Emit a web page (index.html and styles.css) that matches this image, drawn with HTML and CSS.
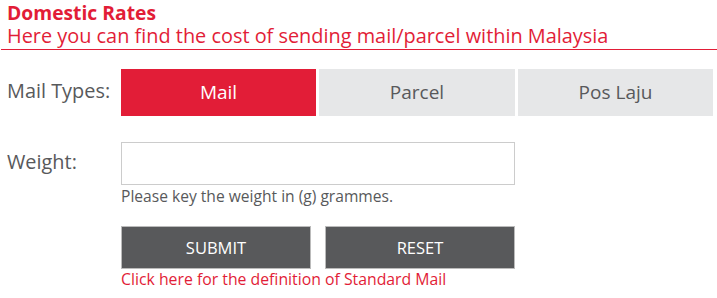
FILE: index.html
```html
<!DOCTYPE html>
<html lang="en">
<head>
  <meta charset="UTF-8">
  <meta name="viewport" content="width=device-width, initial-scale=1">
  <title>Domestic Rates</title>
  <link rel="stylesheet" href="styles.css">
</head>
<body>
  <div class="rates-container">
    <div class="rates-header">
      <h2>Domestic Rates</h2>
      <p class="subtitle">Here you can find the cost of sending mail/parcel within Malaysia</p>
    </div>

    <div class="form-row types-row">
      <span class="label">Mail Types:</span>
      <div class="type-tabs">
        <button class="type-tab active">Mail</button>
        <button class="type-tab">Parcel</button>
        <button class="type-tab">Pos Laju</button>
      </div>
    </div>

    <div class="form-row weight-row">
      <span class="label">Weight:</span>
      <div class="field">
        <input class="weight-input" type="text">
        <span class="hint">Please key the weight in (g) grammes.</span>
      </div>
    </div>

    <div class="form-row actions-row">
      <span class="label"></span>
      <div class="field">
        <div class="actions">
          <button class="action-btn">SUBMIT</button>
          <button class="action-btn">RESET</button>
        </div>
        <a class="definition-link" href="#">Click here for the definition of Standard Mail</a>
      </div>
    </div>
  </div>
</body>
</html>
```

FILE: styles.css
```css
:root {
  --red: #e21d37;
  --text-color: #58595b;
  --tab-bg: #e6e7e8;
  --btn-bg: #58595b;
  --border-color: #cccccc;
}

body {
  font-family: "Open Sans", "Noto Sans", Arial, sans-serif;
  color: var(--text-color);
  margin: 0;
  padding: 0;
  background: #fff;
}

.rates-container {
  width: 717px;
}

.rates-header {
  border-bottom: 1px solid #e21d37;
  margin-left: 1px;
  padding: 1px 6px 2px;
}

h2 {
  margin: 0;
  color: var(--red);
  font-size: 19.3px;
  font-weight: bold;
  line-height: 24px;
}

.subtitle {
  margin: 0;
  color: var(--red);
  font-size: 19.9px;
  line-height: 22px;
}

.form-row {
  display: grid;
  grid-template-columns: 114px 1fr;
  padding-left: 7px;
}

.label {
  font-size: 19.9px;
}

.types-row {
  margin-top: 19px;
  align-items: center;
}

.types-row .label {
  padding-bottom: 5px;
}

.type-tabs {
  display: grid;
  grid-template-columns: 195px 196px 195px;
  gap: 3px;
}

.type-tab {
  height: 47px;
  border: none;
  background: var(--tab-bg);
  color: var(--text-color);
  font-family: inherit;
  font-size: 19px;
  padding: 0 0 2px;
}

.type-tab.active {
  background: var(--red);
  color: #fff;
}

.weight-row {
  margin-top: 26px;
}

.weight-row .label {
  line-height: 40px;
}

.field {
  display: flex;
  flex-direction: column;
  align-items: flex-start;
}

.weight-input {
  box-sizing: border-box;
  width: 394px;
  height: 43px;
  margin: 0;
  border: 1px solid var(--border-color);
  font-family: inherit;
  font-size: 15px;
}

.hint {
  margin-top: 1px;
  font-size: 15.6px;
  line-height: 20px;
}

.actions-row {
  margin-top: 20px;
}

.actions {
  display: flex;
  gap: 14px;
}

.action-btn {
  box-sizing: border-box;
  width: 190px;
  height: 43px;
  background: var(--btn-bg);
  border: 1px solid #bbbbbb;
  color: #fff;
  font-family: inherit;
  font-size: 16.5px;
  padding: 0;
}

.definition-link {
  color: var(--red);
  text-decoration: none;
  font-size: 15.8px;
  line-height: 21px;
}
```
